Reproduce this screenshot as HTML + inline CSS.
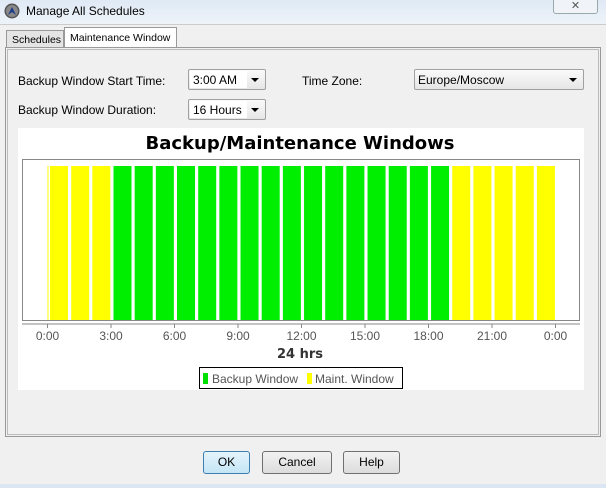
<!DOCTYPE html>
<html><head><style>
*{margin:0;padding:0;box-sizing:border-box}
body{width:606px;height:488px;overflow:hidden;font-family:"Liberation Sans",sans-serif;font-size:12px;color:#000;background:#f0f0f0;position:relative}
.abs{position:absolute}
.title{left:0;top:0;width:606px;height:24px;background:linear-gradient(#dfe9f5,#eef3f9);}
.combo{border:1px solid #a0a0a0;border-radius:2px;background:linear-gradient(#fafafa,#e6e6e6);height:21px;font-size:12px;padding:3px 0 0 4px}
.combo .w{position:absolute;left:1px;top:1px;bottom:1px;background:#fff}
.arr{position:absolute;right:6px;top:8px;width:0;height:0;border-left:4px solid transparent;border-right:4px solid transparent;border-top:4px solid #000}
.btn{border:1px solid #707070;border-radius:3px;background:linear-gradient(#f2f2f2,#dcdcdc);text-align:center;font-size:12px;line-height:21px;height:23px}
</style></head><body>
<div class="abs title"></div>
<svg class="abs" style="left:4px;top:3px" width="16" height="16"><circle cx="8" cy="8" r="7.5" fill="#555"/><circle cx="8" cy="8" r="6" fill="#888"/><path d="M4 12 L8 4 L12 12 L8 9 Z" fill="#1a3a8a"/></svg>
<div class="abs" style="left:26px;top:4px;font-size:12px">Manage All Schedules</div>
<div class="abs" style="left:553px;top:-2px;width:45px;height:16px;border:1px solid #9aa;border-radius:3px;background:#f0f4f8;text-align:center;font-size:11px;line-height:14px;color:#555">✕</div>
<div class="abs" style="left:0;top:24px;width:606px;height:464px;background:#f0f0f0;border-top:1px solid #ccc"></div>
<!-- tabs -->
<div class="abs" style="left:6px;top:30px;width:58px;height:18px;border:1px solid #999;border-bottom:none;background:#e4e4e4;font-size:10.5px;padding:3px 0 0 5px">Schedules</div>
<div class="abs" style="left:64px;top:27px;width:113px;height:21px;border:1px solid #999;border-bottom:none;background:#fff;font-size:10.5px;padding:4px 0 0 5px">Maintenance Window</div>
<div class="abs" style="left:5px;top:47px;width:596px;height:390px;border:1px solid #999;"></div>
<div class="abs" style="left:7px;top:49px;width:592px;height:386px;border:1px solid #bbb;"></div>
<div class="abs" style="left:18px;top:74px">Backup Window Start Time:</div>
<div class="abs" style="left:18px;top:103px">Backup Window Duration:</div>
<div class="abs" style="left:302px;top:74px">Time Zone:</div>
<div class="abs combo" style="left:188px;top:69px;width:78px"><div class="w" style="width:57px"></div><span style="position:relative">3:00 AM</span><div class="arr"></div></div>
<div class="abs combo" style="left:188px;top:99px;width:78px"><div class="w" style="width:57px"></div><span style="position:relative">16 Hours</span><div class="arr"></div></div>
<div class="abs combo" style="left:414px;top:69px;width:170px;padding-left:3px">Europe/Moscow<div class="arr"></div></div>
<!-- chart -->
<svg class="abs" style="left:18px;top:128px" width="566" height="262" font-family="Liberation Sans, sans-serif">
<rect width="566" height="262" fill="#fff"/>
<text x="282" y="21" text-anchor="middle" font-weight="bold" font-size="18" font-family="DejaVu Sans, sans-serif">Backup/Maintenance Windows</text>
<rect x="4.5" y="31.5" width="557" height="161" fill="none" stroke="#888"/>
<g id="bars"></g>
<line x1="4" y1="196" x2="562" y2="196" stroke="#888"/>
<g font-size="12" fill="#555" text-anchor="middle">
<text x="29.5" y="212">0:00</text><text x="93" y="212">3:00</text><text x="156.5" y="212">6:00</text><text x="220" y="212">9:00</text><text x="283.5" y="212">12:00</text><text x="347" y="212">15:00</text><text x="410.5" y="212">18:00</text><text x="474" y="212">21:00</text><text x="537.5" y="212">0:00</text>
</g>
<g stroke="#888"><line x1="29.5" y1="196" x2="29.5" y2="200"/><line x1="93" y1="196" x2="93" y2="200"/><line x1="156.5" y1="196" x2="156.5" y2="200"/><line x1="220" y1="196" x2="220" y2="200"/><line x1="283.5" y1="196" x2="283.5" y2="200"/><line x1="347" y1="196" x2="347" y2="200"/><line x1="410.5" y1="196" x2="410.5" y2="200"/><line x1="474" y1="196" x2="474" y2="200"/><line x1="537.5" y1="196" x2="537.5" y2="200"/></g>
<text x="282" y="230" text-anchor="middle" font-weight="bold" font-size="13" fill="#333" font-family="DejaVu Sans, sans-serif">24 hrs</text>
<rect x="181.5" y="239.5" width="203" height="21" fill="#fff" stroke="#000"/>
<rect x="185" y="245" width="5" height="11" fill="#00e000"/>
<text x="194" y="255" font-size="12" fill="#555">Backup Window</text>
<rect x="289" y="245" width="5" height="11" fill="#ffff00"/>
<text x="297" y="255" font-size="12" fill="#555">Maint. Window</text>
</svg>
<script>
var g=document.getElementById('bars'),s='';
for(var i=0;i<24;i++){var x=29.5+i*21.17;var c=(i>=3&&i<19)?'#00ee00':'#ffff00';s+='<rect x="'+(x+2.5)+'" y="38" width="18" height="154" fill="'+c+'"/>';if(i==0)s+='<rect x="'+(x)+'" y="38" width="1" height="154" fill="#ffff00"/>';}
g.innerHTML=s;
</script>
<!-- buttons -->
<div class="abs btn" style="left:203px;top:451px;width:47px;border-color:#3c7fb1;background:linear-gradient(#e5f4fc,#c4e5f6)">OK</div>
<div class="abs btn" style="left:262px;top:451px;width:70px">Cancel</div>
<div class="abs btn" style="left:343px;top:451px;width:57px">Help</div>
<div class="abs" style="left:0;top:484px;width:606px;height:4px;background:#dbe6f2"></div>
</body></html>
